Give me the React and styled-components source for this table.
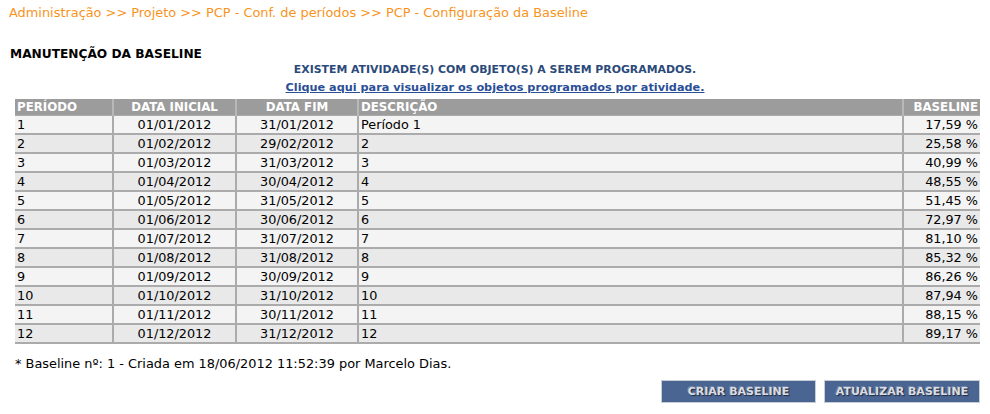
import React from "react";
import styled, { createGlobalStyle } from "styled-components";

const Global = createGlobalStyle`
  html, body { margin: 0; padding: 0; background: #fff; }
  body { font-family: "DejaVu Sans", Verdana, sans-serif; color: #000; }
`;

const Page = styled.div`
  width: 990px;
  height: 414px;
  display: flex;
  flex-direction: column;
  box-sizing: border-box;
  overflow: hidden;
`;

const Breadcrumb = styled.div`
  color: #f7941d;
  font-size: 12.9px;
  line-height: 16px;
  padding: 5px 0 0 9px;
`;

const Title = styled.h1`
  margin: 0;
  padding: 25px 0 0 10px;
  font-size: 12.2px;
  line-height: 16px;
  font-weight: bold;
`;

const Notice = styled.div`
  text-align: center;
  color: #2b4a7a;
  font-size: 10.9px;
  font-weight: bold;
  line-height: 14px;
  margin-top: 1px;
`;

const ProgLink = styled.a`
  display: block;
  text-align: center;
  color: #2b4f96;
  font-size: 11.25px;
  font-weight: bold;
  line-height: 16px;
  text-decoration: underline;
  margin-top: 3px;
  cursor: pointer;
`;

const TableWrap = styled.div`
  padding: 3px 10px 0 15px;
`;

const Table = styled.table`
  width: 965px;
  border-collapse: collapse;
  table-layout: fixed;
  font-size: 12.8px;
`;

const Th = styled.th`
  background: #9c9c9c;
  color: #fff;
  font-size: 11.8px;
  font-weight: bold;
  height: 16px;
  padding: 0 2px;
  line-height: 16px;
  text-align: ${(p) => p.$align || "left"};
  border-left: 2px solid #b8b8b8;
  border-bottom: 1px solid #aaa;
  white-space: nowrap;
  &:first-child { border-left: none; }
`;

const Tr = styled.tr`
  background: ${(p) => (p.$alt ? "#e9e9e9" : "#f4f4f4")};
`;

const Td = styled.td`
  height: 17px;
  line-height: 17px;
  padding: 0 2px;
  text-align: ${(p) => p.$align || "left"};
  border-bottom: 2px solid #ababab;
  border-left: 2px solid #ababab;
  white-space: nowrap;
  &:first-child { border-left: none; }
`;

const Footer = styled.div`
  padding: 12px 0 0 15px;
  font-size: 12.9px;
  line-height: 16px;
`;

const Buttons = styled.div`
  display: flex;
  justify-content: flex-end;
  gap: 8px;
  padding: 8px 10px 0 0;
`;

const Button = styled.button`
  width: ${(p) => p.$w}px;
  height: 23px;
  background: #4a6592;
  border: 1px solid #c8ccd4;
  color: #d9dde3;
  font-family: "DejaVu Sans", Verdana, sans-serif;
  font-size: 11px;
  font-weight: bold;
  text-shadow: 1px 1px 1px #1e2c44, -1px -1px 0 #7286a8;
  padding: 0;
  cursor: pointer;
`;

const rows = [
  ["1", "01/01/2012", "31/01/2012", "Período 1", "17,59 %"],
  ["2", "01/02/2012", "29/02/2012", "2", "25,58 %"],
  ["3", "01/03/2012", "31/03/2012", "3", "40,99 %"],
  ["4", "01/04/2012", "30/04/2012", "4", "48,55 %"],
  ["5", "01/05/2012", "31/05/2012", "5", "51,45 %"],
  ["6", "01/06/2012", "30/06/2012", "6", "72,97 %"],
  ["7", "01/07/2012", "31/07/2012", "7", "81,10 %"],
  ["8", "01/08/2012", "31/08/2012", "8", "85,32 %"],
  ["9", "01/09/2012", "30/09/2012", "9", "86,26 %"],
  ["10", "01/10/2012", "31/10/2012", "10", "87,94 %"],
  ["11", "01/11/2012", "30/11/2012", "11", "88,15 %"],
  ["12", "01/12/2012", "31/12/2012", "12", "89,17 %"],
];

export default function App() {
  return (
    <Page>
      <Global />
      <Breadcrumb>
        Administração &gt;&gt; Projeto &gt;&gt; PCP - Conf. de períodos &gt;&gt; PCP - Configuração da Baseline
      </Breadcrumb>
      <Title>MANUTENÇÃO DA BASELINE</Title>
      <Notice>EXISTEM ATIVIDADE(S) COM OBJETO(S) A SEREM PROGRAMADOS.</Notice>
      <ProgLink>Clique aqui para visualizar os objetos programados por atividade.</ProgLink>
      <TableWrap>
        <Table>
          <colgroup>
            <col style={{ width: 98 }} />
            <col style={{ width: 123 }} />
            <col style={{ width: 122 }} />
            <col style={{ width: 545 }} />
            <col style={{ width: 77 }} />
          </colgroup>
          <thead>
            <tr>
              <Th>PERÍODO</Th>
              <Th $align="center">DATA INICIAL</Th>
              <Th $align="center">DATA FIM</Th>
              <Th>DESCRIÇÃO</Th>
              <Th $align="right">BASELINE</Th>
            </tr>
          </thead>
          <tbody>
            {rows.map((r, i) => (
              <Tr key={r[0]} $alt={i % 2 === 1}>
                <Td>{r[0]}</Td>
                <Td $align="center">{r[1]}</Td>
                <Td $align="center">{r[2]}</Td>
                <Td>{r[3]}</Td>
                <Td $align="right">{r[4]}</Td>
              </Tr>
            ))}
          </tbody>
        </Table>
      </TableWrap>
      <Footer>* Baseline nº: 1 - Criada em 18/06/2012 11:52:39 por Marcelo Dias.</Footer>
      <Buttons>
        <Button $w={155}>CRIAR BASELINE</Button>
        <Button $w={156}>ATUALIZAR BASELINE</Button>
      </Buttons>
    </Page>
  );
}
